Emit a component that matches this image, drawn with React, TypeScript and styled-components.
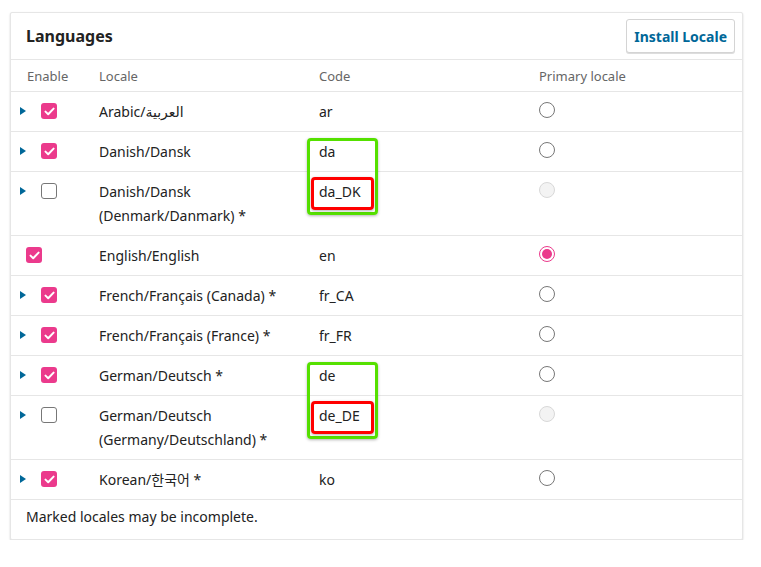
import styled, { createGlobalStyle } from 'styled-components';

const GlobalStyle = createGlobalStyle`
  body {
    margin: 0;
    background: #fff;
    font-family: 'Noto Sans', 'Noto Sans CJK KR', 'DejaVu Sans', sans-serif;
    color: #222;
  }
`;

const Page = styled.div`
  padding: 12px 0 0 10px;
`;

const Panel = styled.section`
  width: 731px;
  border: 1px solid #e6e6e6;
  border-radius: 2px;
  box-shadow: 0 1px 2px rgba(0, 0, 0, 0.18);
  background: #fff;
`;

const PanelHeader = styled.header`
  display: flex;
  align-items: center;
  justify-content: space-between;
  height: 46px;
  padding: 0 7px 0 15px;
  border-bottom: 1px solid #e6e6e6;
`;

const Title = styled.h2`
  margin: 0;
  font-size: 16px;
  font-weight: 700;
  color: #222;
`;

const Button = styled.button`
  height: 34px;
  padding: 0 7px;
  border: 1px solid #d4d4d4;
  border-radius: 3px;
  background: #fff;
  box-shadow: 0 1px 0 #ddd;
  font-family: inherit;
  font-size: 14px;
  font-weight: 700;
  color: #006798;
`;

const Row = styled.div<{ $head?: boolean }>`
  display: grid;
  grid-template-columns: 72px 220px 220px 1fr;
  min-height: ${(p) => (p.$head ? '31px' : '0')};
  border-bottom: 1px solid #e6e6e6;
  font-size: ${(p) => (p.$head ? '13px' : '14px')};
  color: ${(p) => (p.$head ? '#666' : '#222')};
  align-items: ${(p) => (p.$head ? 'center' : 'start')};
`;

const Cell = styled.div`
  position: relative;
  padding: 8px 0 7px 16px;
  line-height: 24px;
`;

const HeadCell = styled.div`
  padding-left: 16px;
  line-height: 20px;
`;

const EnableCell = styled.div<{ $noToggle?: boolean }>`
  display: flex;
  align-items: center;
  gap: 6px;
  height: 24px;
  padding: 7px 0 8px ${(p) => (p.$noToggle ? '15px' : '0')};
`;

const Toggle = styled.span`
  display: flex;
  align-items: center;
  justify-content: center;
  width: 24px;
  height: 16px;
`;

const Checkbox = styled.span<{ $checked?: boolean }>`
  display: flex;
  align-items: center;
  justify-content: center;
  box-sizing: border-box;
  width: 16px;
  height: 16px;
  border-radius: 3px;
  background: ${(p) => (p.$checked ? '#eb3a8c' : '#fff')};
  border: ${(p) => (p.$checked ? 'none' : '1px solid #777')};
`;

const Radio = styled.span<{ $state: 'off' | 'on' | 'disabled' }>`
  display: flex;
  align-items: center;
  justify-content: center;
  box-sizing: border-box;
  width: 16px;
  height: 16px;
  margin-top: 2px;
  border-radius: 50%;
  border: 1px solid
    ${(p) => (p.$state === 'on' ? '#eb3a8c' : p.$state === 'disabled' ? '#d8d8d8' : '#777')};
  background: ${(p) => (p.$state === 'disabled' ? '#f3f3f3' : '#fff')};

  &::after {
    content: '';
    display: ${(p) => (p.$state === 'on' ? 'block' : 'none')};
    width: 10px;
    height: 10px;
    border-radius: 50%;
    background: #eb3a8c;
  }
`;

const Mark = styled.span<{ $color: string; $top: number; $left: number; $w: number; $h: number }>`
  position: absolute;
  top: ${(p) => p.$top}px;
  left: ${(p) => p.$left}px;
  width: ${(p) => p.$w}px;
  height: ${(p) => p.$h}px;
  box-sizing: border-box;
  border: 3px solid ${(p) => p.$color};
  border-radius: 4px;
  box-shadow: 0 1px 3px rgba(0, 0, 0, 0.3);
  pointer-events: none;
`;

const Footer = styled.div`
  padding: 5px 15px 10px;
  line-height: 24px;
  font-size: 14px;
  color: #222;
`;

type Locale = {
  name: string[];
  code: string;
  enabled: boolean;
  toggle: boolean;
  primary: 'off' | 'on' | 'disabled';
  mark?: 'green' | 'red';
};

const locales: Locale[] = [
  { name: ['Arabic/العربية'], code: 'ar', enabled: true, toggle: true, primary: 'off' },
  { name: ['Danish/Dansk'], code: 'da', enabled: true, toggle: true, primary: 'off', mark: 'green' },
  { name: ['Danish/Dansk', '(Denmark/Danmark) *'], code: 'da_DK', enabled: false, toggle: true, primary: 'disabled', mark: 'red' },
  { name: ['English/English'], code: 'en', enabled: true, toggle: false, primary: 'on' },
  { name: ['French/Français (Canada) *'], code: 'fr_CA', enabled: true, toggle: true, primary: 'off' },
  { name: ['French/Français (France) *'], code: 'fr_FR', enabled: true, toggle: true, primary: 'off' },
  { name: ['German/Deutsch *'], code: 'de', enabled: true, toggle: true, primary: 'off', mark: 'green' },
  { name: ['German/Deutsch', '(Germany/Deutschland) *'], code: 'de_DE', enabled: false, toggle: true, primary: 'disabled', mark: 'red' },
  { name: ['Korean/한국어 *'], code: 'ko', enabled: true, toggle: true, primary: 'off' },
];

const Caret = () => (
  <svg width="6" height="8" viewBox="0 0 6 8">
    <path d="M0 0L6 4L0 8Z" fill="#006798" />
  </svg>
);

const Tick = () => (
  <svg width="11" height="9" viewBox="0 0 11 9">
    <path d="M1.5 4.6L4.2 7.2L9.6 1.6" fill="none" stroke="#fff" strokeWidth="2" strokeLinecap="round" strokeLinejoin="round" />
  </svg>
);

const App = () => {
  return (
    <Page>
      <GlobalStyle />
      <Panel>
        <PanelHeader>
          <Title>Languages</Title>
          <Button>Install Locale</Button>
        </PanelHeader>
        <Row $head>
          <HeadCell>Enable</HeadCell>
          <HeadCell>Locale</HeadCell>
          <HeadCell>Code</HeadCell>
          <HeadCell>Primary locale</HeadCell>
        </Row>
        {locales.map((l) => (
          <Row key={l.code}>
            <EnableCell $noToggle={!l.toggle}>
              {l.toggle && (
                <Toggle>
                  <Caret />
                </Toggle>
              )}
              <Checkbox $checked={l.enabled}>{l.enabled && <Tick />}</Checkbox>
            </EnableCell>
            <Cell>
              {l.name.map((line) => (
                <div key={line}>{line}</div>
              ))}
            </Cell>
            <Cell>
              {l.code}
              {l.mark === 'green' && <Mark $color="#55e000" $top={6} $left={4} $w={71} $h={77} />}
              {l.mark === 'red' && <Mark $color="#ff0000" $top={5} $left={8} $w={63} $h={33} />}
            </Cell>
            <Cell>
              <Radio $state={l.primary} />
            </Cell>
          </Row>
        ))}
        <Footer>Marked locales may be incomplete.</Footer>
      </Panel>
    </Page>
  );
};

export default App;
